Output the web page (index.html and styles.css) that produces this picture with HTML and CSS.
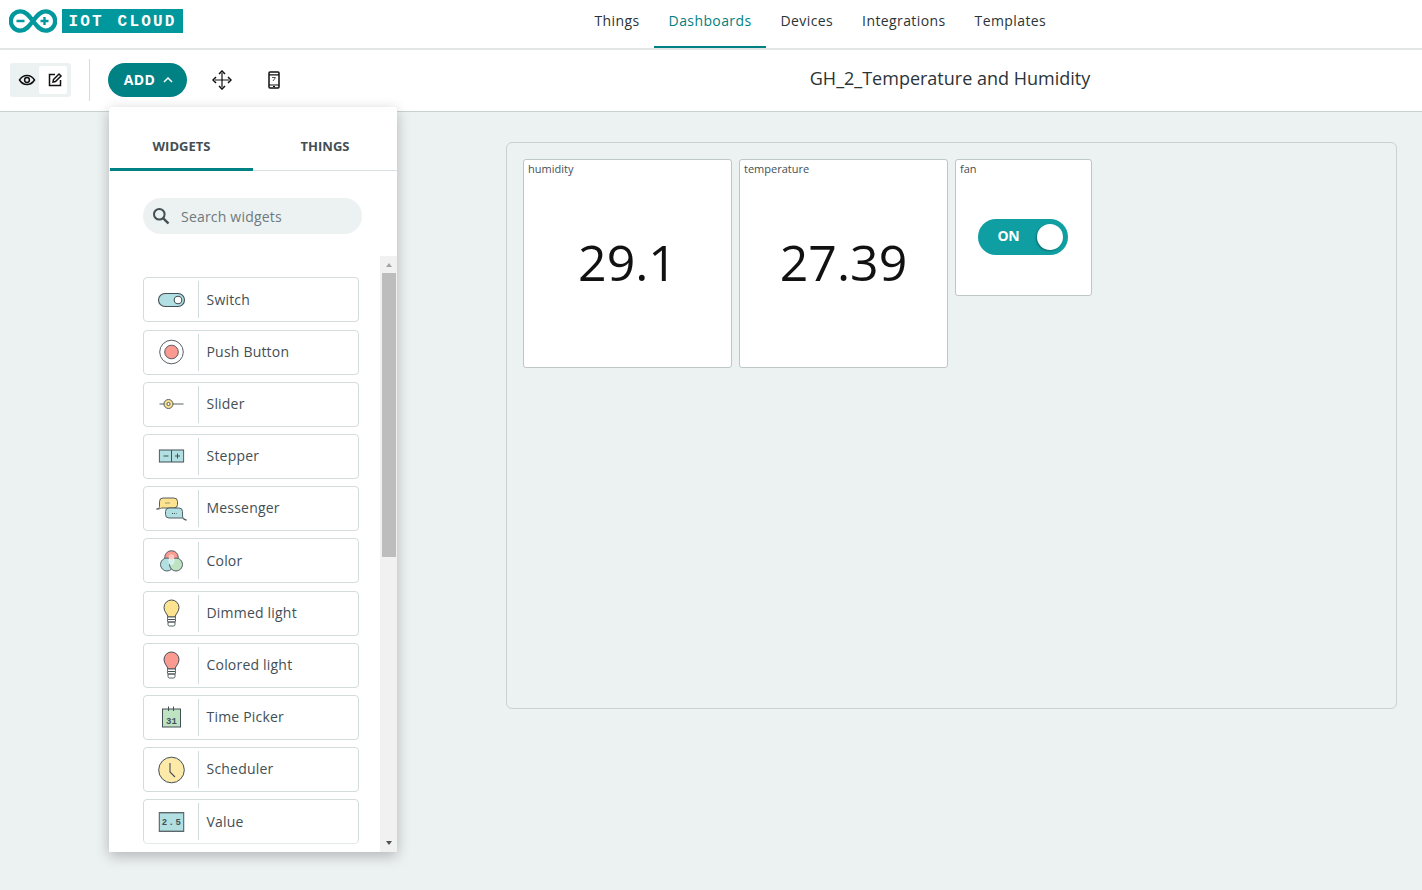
FILE: index.html
```html
<!DOCTYPE html>
<html lang="en">
<head>
    <meta charset="UTF-8">
    <title>GH_2_Temperature and Humidity</title>
    <link rel="stylesheet" href="styles.css">
</head>
<body>
    <header class="topbar">
        <div class="brand">
            <svg class="brand-mark" width="48" height="24" viewBox="0 0 48 24">
                <path d="M11.500 2.300c5.500 0 9 5 12.500 9.700c3.500-4.700 7-9.700 12.500-9.700a9.700 9.700 0 0 1 0 19.400c-5.500 0-9-5-12.500-9.700c-3.500 4.700-7 9.700-12.500 9.700a9.700 9.700 0 0 1 0-19.400z" fill="none" stroke="#00979d" stroke-width="4.300"/>
                <path d="M7.500 12h8M31.500 12h8M35.500 8v8" fill="none" stroke="#00979d" stroke-width="2.400"/>
            </svg>
            <span class="brand-name">IOT CLOUD</span>
        </div>
        <nav class="nav">
            <a class="nav-link">Things</a>
            <a class="nav-link active">Dashboards</a>
            <a class="nav-link">Devices</a>
            <a class="nav-link">Integrations</a>
            <a class="nav-link">Templates</a>
        </nav>
    </header>

    <div class="toolbar">
        <div class="tools">
            <div class="mode-switch">
                <span class="mode-btn">
                    <svg width="18" height="18" viewBox="0 0 18 18"><path d="M1.500 9C3.500 5.800 6 4.500 9 4.500s5.500 1.300 7.500 4.500c-2 3.200-4.500 4.500-7.500 4.500S3.500 12.200 1.500 9z" fill="none" stroke="#111" stroke-width="1.500"/><circle cx="9" cy="9" r="2.400" fill="none" stroke="#111" stroke-width="1.500"/></svg>
                </span>
                <span class="mode-btn current">
                    <svg width="18" height="18" viewBox="0 0 18 18"><path d="M9 3.500H3.500v11h11V9" fill="none" stroke="#111" stroke-width="1.500"/><path d="M7.500 8.500l5.500-5.500 2 2-5.500 5.500-2.500.5z" fill="none" stroke="#111" stroke-width="1.500"/></svg>
                </span>
            </div>
            <span class="tool-divider"></span>
            <button class="add-btn">ADD
                <svg width="10" height="6" viewBox="0 0 10 6"><path d="M1 5l4-4 4 4" fill="none" stroke="#fff" stroke-width="1.500"/></svg>
            </button>
            <svg class="tool-move" width="20" height="20" viewBox="0 0 20 20"><path d="M10 3v14M3 10h14" stroke="#111" stroke-width="1.200"/><path d="M7 4l3-3 3 3M7 16l3 3 3-3M4 7l-3 3 3 3M16 7l3 3-3 3" fill="none" stroke="#111" stroke-width="1.500"/></svg>
            <svg class="tool-device" width="12" height="18" viewBox="0 0 12 18"><rect x="1" y="1" width="10" height="16" rx="1" fill="none" stroke="#111" stroke-width="1.500"/><path d="M1 3.800h10M1 14h10" stroke="#111" stroke-width="1.200"/><path d="M4 6.500h3.500L5 10" fill="none" stroke="#555" stroke-width="1"/><path d="M5 15.500h2" stroke="#111" stroke-width="1"/></svg>
        </div>
        <h1 class="board-title">GH_2_Temperature and Humidity</h1>
    </div>

    <main class="board">
        <div class="canvas">
            <section class="widget widget-big">
                <span class="widget-label">humidity</span>
                <div class="widget-value">29.1</div>
            </section>
            <section class="widget widget-big">
                <span class="widget-label">temperature</span>
                <div class="widget-value">27.39</div>
            </section>
            <section class="widget widget-small">
                <span class="widget-label">fan</span>
                <div class="toggle"><span class="toggle-text">ON</span><span class="toggle-knob"></span></div>
            </section>
        </div>
    </main>

    <aside class="picker">
        <div class="tabs">
            <div class="tab active">WIDGETS</div>
            <div class="tab">THINGS</div>
        </div>
        <div class="search">
            <svg width="18" height="18" viewBox="0 0 18 18"><circle cx="7.300" cy="7.300" r="5.300" fill="none" stroke="#434f54" stroke-width="2"/><path d="M11.300 11.300l5.200 5.200" stroke="#434f54" stroke-width="2.400"/></svg>
            <span>Search widgets</span>
        </div>
        <div class="list-wrap">
            <ul class="list">
                <li class="item">
                    <span class="item-icon"><svg width="28" height="16" viewBox="0 0 28 16"><rect x="1" y="1.500" width="26" height="13" rx="6.500" fill="#b2e0e2" stroke="#434f54" stroke-width="1.100"/><circle cx="20.500" cy="8" r="3.800" fill="#fff" stroke="#434f54" stroke-width="1.100"/></svg></span>
                    <span class="item-name">Switch</span>
                </li>
                <li class="item">
                    <span class="item-icon"><svg width="26" height="26" viewBox="0 0 26 26"><circle cx="13" cy="13" r="11.800" fill="#fff" stroke="#434f54" stroke-width=".9"/><circle cx="13" cy="13" r="6.800" fill="#fb9a91" stroke="#434f54" stroke-width=".9"/></svg></span>
                    <span class="item-name">Push Button</span>
                </li>
                <li class="item">
                    <span class="item-icon"><svg width="26" height="14" viewBox="0 0 26 14"><path d="M1 7h24" stroke="#434f54" stroke-width=".9"/><circle cx="10" cy="7" r="4.500" fill="#fde28f" stroke="#434f54" stroke-width=".9"/><circle cx="10" cy="7" r="1.600" fill="#fff" stroke="#434f54" stroke-width=".9"/></svg></span>
                    <span class="item-name">Slider</span>
                </li>
                <li class="item">
                    <span class="item-icon"><svg width="26" height="14" viewBox="0 0 26 14"><rect x=".8" y="1" width="24.400" height="12" fill="#b2e0e2" stroke="#434f54"/><path d="M13 1v12M5 7h5M16.500 7h5M19 4.500v5" stroke="#434f54" stroke-width="1"/></svg></span>
                    <span class="item-name">Stepper</span>
                </li>
                <li class="item">
                    <span class="item-icon"><svg width="32" height="24" viewBox="0 0 32 24"><path d="M1 12c2 0 3-1 3-2.500V4.500A3.500 3.500 0 0 1 7.500 1h11A3.500 3.500 0 0 1 22 4.500v3A3.500 3.500 0 0 1 18.500 11H6c-1.500 1-3 1-5 1z" fill="#fde28f" stroke="#434f54" stroke-width=".9"/><path d="M31 23c-2 0-3.200-.8-4-2H13.500a3.500 3.500 0 0 1-3.500-3.500v-3a3.500 3.500 0 0 1 3.500-3.500h10a3.500 3.500 0 0 1 3.500 3.500V19c0 2 2 3.500 4 4z" fill="#b2e0e2" stroke="#434f54" stroke-width=".9"/><path d="M10 6h4.500M16.500 16.500h4.500" stroke="#434f54" stroke-dasharray="1 1"/></svg></span>
                    <span class="item-name">Messenger</span>
                </li>
                <li class="item">
                    <span class="item-icon"><svg width="24" height="24" viewBox="0 0 24 24"><circle cx="12" cy="8.500" r="6.800" fill="#fb9a91" stroke="#434f54" stroke-width=".9"/><circle cx="7.500" cy="15.500" r="6.500" fill="#b2e0e2" stroke="#434f54" stroke-width=".9"/><circle cx="16.500" cy="15.500" r="6.500" fill="#bde3c2" stroke="#434f54" stroke-width=".9"/><path d="M12 6.500c1.800 1.200 3 2.800 3 5l-3 5.500-3-5.500c0-2.200 1.200-3.800 3-5z" fill="#e9f7f4"/><circle cx="12" cy="8" r="2.800" fill="#fbc9c2"/><circle cx="12" cy="13" r="2.800" fill="#d5f1ee"/></svg></span>
                    <span class="item-name">Color</span>
                </li>
                <li class="item">
                    <span class="item-icon"><svg width="18" height="28" viewBox="0 0 18 28"><path d="M5.500 18C5 15 1.500 13 1.500 8.500a7.500 7.500 0 0 1 15 0C16.500 13 13 15 12.500 18z" fill="#fde28f" stroke="#434f54"/><path d="M5 18h8v1.500a1 1 0 0 1-1 1h-6a1 1 0 0 1-1-1zM5 20.500h8V22a1 1 0 0 1-1 1H6a1 1 0 0 1-1-1zM5.500 23h7v2.500a1.500 1.500 0 0 1-1.500 1.500H7a1.500 1.500 0 0 1-1.500-1.500z" fill="#fff" stroke="#434f54" stroke-width=".9"/></svg></span>
                    <span class="item-name">Dimmed light</span>
                </li>
                <li class="item">
                    <span class="item-icon"><svg width="18" height="28" viewBox="0 0 18 28"><path d="M5.500 18C5 15 1.500 13 1.500 8.500a7.500 7.500 0 0 1 15 0C16.500 13 13 15 12.500 18z" fill="#fb9a91" stroke="#434f54"/><path d="M5 18h8v1.500a1 1 0 0 1-1 1h-6a1 1 0 0 1-1-1zM5 20.500h8V22a1 1 0 0 1-1 1H6a1 1 0 0 1-1-1zM5.500 23h7v2.500a1.500 1.500 0 0 1-1.500 1.500H7a1.500 1.500 0 0 1-1.500-1.500z" fill="#fff" stroke="#434f54" stroke-width=".9"/></svg></span>
                    <span class="item-name">Colored light</span>
                </li>
                <li class="item">
                    <span class="item-icon"><svg width="20" height="22" viewBox="0 0 20 22"><rect x="1" y="3" width="18" height="18" fill="#bde3c2" stroke="#434f54"/><path d="M7 .5V5M12 .5V5" stroke="#434f54"/><text class="icon-num" x="10" y="17.500" text-anchor="middle">31</text></svg></span>
                    <span class="item-name">Time Picker</span>
                </li>
                <li class="item">
                    <span class="item-icon"><svg width="28" height="28" viewBox="0 0 28 28"><circle cx="14" cy="14" r="12.800" fill="#fdeaa8" stroke="#434f54" stroke-width="1"/><path d="M12.500 7v9l5 5" fill="none" stroke="#434f54" stroke-width="1.100"/></svg></span>
                    <span class="item-name">Scheduler</span>
                </li>
                <li class="item">
                    <span class="item-icon"><svg width="26" height="20" viewBox="0 0 26 20"><rect x=".7" y=".7" width="24.600" height="18.600" fill="#b2e0e2" stroke="#5c686c" stroke-width="1.400"/><text class="icon-num" x="13.500" y="13" text-anchor="middle" letter-spacing="1.500">2.5</text></svg></span>
                    <span class="item-name">Value</span>
                </li>
            </ul>
            <div class="scroll">
                <span class="scroll-up"></span>
                <span class="scroll-thumb"></span>
                <span class="scroll-down"></span>
            </div>
            <div class="fade"></div>
        </div>
    </aside>
</body>
</html>
```

FILE: styles.css
```css
* {
    box-sizing: border-box;
}
html, body {
    height: 100%;
}
body {
    margin: 0;
    font-family: "Open Sans", sans-serif;
    color: #434f54;
    background: #ecf1f1;
    display: flex;
    flex-direction: column;
    overflow: hidden;
}
.topbar {
    height: 50px;
    flex: none;
    display: flex;
    align-items: stretch;
    background: #fff;
    border-bottom: 2px solid #e3e6e6;
}
.brand {
    display: flex;
    align-items: center;
    gap: 5px;
    padding: 0 0 6px 9px;
}
.brand-mark {
    display: block;
}
.brand-name {
    width: 121px;
    height: 24px;
    line-height: 26px;
    text-align: center;
    font-family: "Liberation Mono", monospace;
    font-weight: bold;
    font-size: 16px;
    letter-spacing: 2.2px;
    word-spacing: 2px;
    color: #fff;
    background: #00979d;
}
.nav {
    display: flex;
    margin-left: 397px;
}
.nav-link {
    padding: 11px 14.5px 0;
    height: 48px;
    font-size: 14px;
    letter-spacing: 0.4px;
    color: #2b3437;
    border-bottom: 2px solid transparent;
}
.nav-link.active {
    color: #008184;
    border-bottom-color: #008184;
}
.toolbar {
    height: 62px;
    flex: none;
    display: flex;
    background: #fff;
    border-bottom: 1px solid #c9d2d2;
}
.tools {
    width: 506px;
    display: flex;
    align-items: center;
    padding: 0 0 2px 10px;
}
.mode-switch {
    display: flex;
    width: 61px;
    height: 34px;
    padding: 3px 4px 3px 3px;
    background: #ecf1f1;
    border-radius: 3px;
}
.mode-btn {
    flex: 1;
    display: flex;
    align-items: center;
    justify-content: center;
    padding-left: 2px;
    border-radius: 2px;
}
.mode-btn.current {
    background: #fff;
    padding-left: 4px;
}
.tool-divider {
    width: 1px;
    height: 42px;
    margin: 0 18px;
    background: #d5dcdc;
}
.add-btn {
    width: 79px;
    height: 34px;
    display: flex;
    align-items: center;
    justify-content: center;
    gap: 8px;
    padding: 0 0 0 2px;
    border: 0;
    border-radius: 17px;
    background: #008184;
    color: #fff;
    font-family: inherit;
    font-size: 14px;
    font-weight: 700;
    letter-spacing: 0.3px;
}
.tool-move {
    margin-left: 25px;
}
.tool-device {
    margin-left: 36px;
}
.board-title {
    flex: 1;
    margin: 0;
    padding: 15px 28px 0 0;
    text-align: center;
    font-size: 18px;
    line-height: 26px;
    font-weight: 400;
    color: #2b3437;
}
.board {
    flex: 1;
    padding: 30px 25px 0 506px;
}
.canvas {
    height: 567px;
    display: flex;
    align-items: flex-start;
    gap: 7px;
    padding: 16px;
    border: 1px solid #c9d2d2;
    border-radius: 6px;
}
.widget {
    position: relative;
    display: flex;
    align-items: center;
    justify-content: center;
    background: #fff;
    border: 1px solid #bcc7c7;
    border-radius: 3px;
}
.widget-big {
    width: 209px;
    height: 209px;
}
.widget-small {
    width: 137px;
    height: 137px;
}
.widget-label {
    position: absolute;
    top: 1px;
    left: 4px;
    font-size: 11px;
    line-height: 15px;
}
.widget-value {
    margin-top: -4px;
    font-size: 50px;
    color: #111;
}
.toggle {
    width: 90px;
    height: 36px;
    margin: 18px 2px 0 0;
    display: flex;
    align-items: center;
    justify-content: space-between;
    padding: 0 5px 0 20px;
    border-radius: 18px;
    background: #0f9ea1;
}
.toggle-text {
    margin-top: -2px;
    color: #fff;
    font-size: 14px;
    font-weight: 700;
    letter-spacing: -0.3px;
}
.toggle-knob {
    width: 26px;
    height: 26px;
    border-radius: 50%;
    background: #fff;
    box-shadow: -1px 1px 2px rgba(0, 0, 0, 0.3);
}
.picker {
    position: absolute;
    top: 107px;
    left: 109px;
    width: 288px;
    height: 745px;
    display: flex;
    flex-direction: column;
    background: #fff;
    border-radius: 3px;
    box-shadow: 0 4px 14px rgba(0, 0, 0, 0.25);
}
.tabs {
    height: 64px;
    flex: none;
    display: flex;
    padding-left: 1px;
    border-bottom: 1px solid #dae3e3;
}
.tab {
    width: 144px;
    height: 64px;
    padding-top: 30px;
    text-align: center;
    font-size: 13px;
    line-height: 18px;
    font-weight: 700;
}
.tab.active {
    width: 143px;
    border-bottom: 3px solid #008184;
}
.search {
    height: 36px;
    flex: none;
    display: flex;
    align-items: center;
    gap: 11px;
    margin: 27px 0 0 34px;
    width: 219px;
    padding-left: 9px;
    border-radius: 18px;
    background: #ecf1f1;
    font-size: 14px;
    letter-spacing: 0.2px;
    color: #6d7a7e;
}
.list-wrap {
    position: relative;
    flex: 1;
    display: flex;
    margin-top: 22px;
    min-height: 0;
}
.list {
    flex: 1;
    list-style: none;
    margin: 0;
    padding: 21.400px 21px 0 34px;
    display: flex;
    flex-direction: column;
    gap: 7.200px;
    overflow: hidden;
}
.item {
    height: 45px;
    flex: none;
    display: flex;
    align-items: stretch;
    padding: 3px 0;
    border: 1px solid #d3dcdc;
    border-radius: 4px;
}
.item-icon {
    width: 55px;
    flex: none;
    display: flex;
    align-items: center;
    justify-content: center;
    border-right: 1px solid #d3dcdc;
}
.item-icon svg {
    transform: translateX(0.5px);
}
.item-name {
    align-self: center;
    margin-top: -1.500px;
    padding-left: 7.500px;
    font-size: 14px;
    letter-spacing: 0.2px;
}
.icon-num {
    font-family: "Liberation Mono", monospace;
    font-size: 9px;
    font-weight: bold;
    fill: #434f54;
}
.scroll {
    width: 17px;
    flex: none;
    display: flex;
    flex-direction: column;
    align-items: center;
    background: #f1f1f1;
}
.scroll-up, .scroll-down {
    width: 0;
    height: 0;
    border-left: 3.500px solid transparent;
    border-right: 3.500px solid transparent;
}
.scroll-up {
    margin-top: 7px;
    border-bottom: 4px solid #a3a3a3;
}
.scroll-thumb {
    width: 14px;
    height: 284px;
    margin-top: 6px;
    background: #bdbdbd;
}
.scroll-down {
    margin-top: auto;
    margin-bottom: 7px;
    border-top: 4px solid #505050;
}
.fade {
    position: absolute;
    left: 0;
    right: 17px;
    bottom: 0;
    height: 14px;
    background: linear-gradient(rgba(255, 255, 255, 0), #fff);
}
```
